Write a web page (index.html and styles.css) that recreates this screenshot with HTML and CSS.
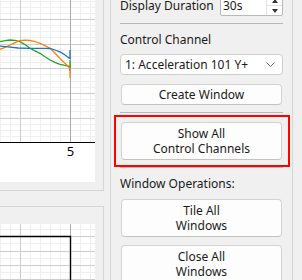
FILE: index.html
```html
<!DOCTYPE html>
<html lang="en">
<head>
  <meta charset="UTF-8">
  <meta name="viewport" content="width=device-width, initial-scale=1.0">
  <title>Channel Monitor</title>
  <link rel="stylesheet" href="styles.css">
</head>
<body>
  <div class="window">
    <div class="plots">
      <div class="plot-frame">
        <svg class="chart" width="95" height="182" viewBox="0 0 95 182">
          <g class="minor">
            <line x1="0" y1="1.5" x2="95" y2="1.5"/><line x1="0" y1="7.5" x2="95" y2="7.5"/><line x1="0" y1="13.5" x2="95" y2="13.5"/>
            <line x1="0" y1="25.5" x2="95" y2="25.5"/><line x1="0" y1="31.5" x2="95" y2="31.5"/><line x1="0" y1="37.5" x2="95" y2="37.5"/>
            <line x1="0" y1="50.5" x2="95" y2="50.5"/><line x1="0" y1="56.5" x2="95" y2="56.5"/><line x1="0" y1="62.5" x2="95" y2="62.5"/>
            <line x1="0" y1="74.5" x2="95" y2="74.5"/><line x1="0" y1="81.5" x2="95" y2="81.5"/><line x1="0" y1="87.5" x2="95" y2="87.5"/>
            <line x1="0" y1="99.5" x2="95" y2="99.5"/><line x1="0" y1="105.5" x2="95" y2="105.5"/><line x1="0" y1="111.5" x2="95" y2="111.5"/>
            <line x1="0" y1="124.5" x2="95" y2="124.5"/><line x1="0" y1="130.5" x2="95" y2="130.5"/><line x1="0" y1="136.5" x2="95" y2="136.5"/>
            <line x1="0.5" y1="0" x2="0.5" y2="142"/><line x1="10.5" y1="0" x2="10.5" y2="142"/><line x1="30.5" y1="0" x2="30.5" y2="142"/>
            <line x1="40.5" y1="0" x2="40.5" y2="142"/><line x1="50.5" y1="0" x2="50.5" y2="142"/><line x1="60.5" y1="0" x2="60.5" y2="142"/>
            <line x1="80.5" y1="0" x2="80.5" y2="142"/><line x1="90.5" y1="0" x2="90.5" y2="142"/>
          </g>
          <g class="major">
            <line x1="0" y1="19.5" x2="95" y2="19.5"/><line x1="0" y1="44.5" x2="95" y2="44.5"/><line x1="0" y1="68.5" x2="95" y2="68.5"/>
            <line x1="0" y1="93.5" x2="95" y2="93.5"/><line x1="0" y1="118.5" x2="95" y2="118.5"/>
            <line x1="20.5" y1="0" x2="20.5" y2="142"/>
          </g>
          <line class="tick-line" x1="70.5" y1="0" x2="70.5" y2="142"/>
          <polyline class="series green" points="0,41.7 5,40.6 10,40 15,40.4 20,41.7 25,44.6 30,48.3 35,50.8 40,53.3 45,56.8 50,60 55,62.3 60,64.3 64,65.2 68,66 69.5,66.5 70,71 70,60"/>
          <polyline class="series orange" points="0,49.3 5,47.3 10,45 15,42.6 20,40.7 25,40.2 30,40.3 35,41.5 40,43.3 45,45.6 50,48.3 53,51 56.7,55 60,58.4 63.3,61.7 66,64.3 68.3,66.7 70,68.5 70,77.7"/>
          <polyline class="series blue" points="0,46.2 8,46.8 18,48 30,48.3 45,48.3 50,48.5 55,50 60,51.9 64,54.2 67,56.5 69.5,58.3 70,58.3 70,50"/>
          <line class="axis" x1="0" y1="142.5" x2="95" y2="142.5"/>
          <text class="tick-label" x="70.5" y="156" text-anchor="middle">5</text>
        </svg>
      </div>
      <div class="plot-frame lower">
        <svg class="chart" width="95" height="57" viewBox="0 0 95 57">
          <g class="minor">
            <line x1="0.5" y1="0" x2="0.5" y2="57"/><line x1="10.5" y1="0" x2="10.5" y2="57"/><line x1="30.5" y1="0" x2="30.5" y2="57"/>
            <line x1="40.5" y1="0" x2="40.5" y2="57"/><line x1="50.5" y1="0" x2="50.5" y2="57"/><line x1="60.5" y1="0" x2="60.5" y2="57"/>
            <line x1="80.5" y1="0" x2="80.5" y2="57"/><line x1="90.5" y1="0" x2="90.5" y2="57"/>
            <line x1="0" y1="5.5" x2="95" y2="5.5"/><line x1="0" y1="19.5" x2="95" y2="19.5"/>
            <line x1="0" y1="34.5" x2="95" y2="34.5"/><line x1="0" y1="48.5" x2="95" y2="48.5"/>
          </g>
          <g class="major">
            <line x1="0" y1="27.5" x2="95" y2="27.5"/><line x1="0" y1="41.5" x2="95" y2="41.5"/><line x1="0" y1="55.5" x2="95" y2="55.5"/>
            <line x1="70" y1="12.5" x2="95" y2="12.5"/>
            <line x1="20.5" y1="0" x2="20.5" y2="57"/>
          </g>
          <line class="tick-line" x1="70.5" y1="0" x2="70.5" y2="12"/>
          <polyline class="frame-box" points="0,12.5 70.5,12.5 70.5,57"/>
        </svg>
      </div>
    </div>

    <div class="sidebar">
      <div class="panel">
        <div class="row">
          <span class="text">Display Duration</span>
          <div class="spin">
            <span class="spin-value">30s</span>
            <div class="spin-arrows">
              <span class="arrow up"></span>
              <span class="arrow down"></span>
            </div>
          </div>
        </div>
        <div class="sep first"></div>
        <div class="text caption">Control Channel</div>
        <div class="combo">
          <span>1: Acceleration 101 Y+</span>
          <svg class="chevron" width="9" height="5" viewBox="0 0 9 5"><polyline points="0.5,0.5 4.5,4.5 8.5,0.5"/></svg>
        </div>
        <button class="btn">Create Window</button>
        <div class="sep"></div>
        <div class="marked">
          <button class="btn tall">Show All<br>Control Channels</button>
        </div>
        <div class="sep"></div>
        <div class="text caption ops">Window Operations:</div>
        <button class="btn tall">Tile All<br>Windows</button>
        <button class="btn tall">Close All<br>Windows</button>
      </div>
    </div>
  </div>
</body>
</html>
```

FILE: styles.css
```css
html, body { margin: 0; padding: 0; }
body { background: #f0f0f0; font-family: 'Noto Sans', 'Liberation Sans', sans-serif; font-size: 12px; color: #1a1a1a; width: 302px; height: 280px; overflow: hidden; }
.window { display: flex; gap: 6px; height: 280px; }

/* plots */
.plots { width: 104px; flex: none; }
.plot-frame { border-right: 1px solid #d6d6d6; border-bottom: 1px solid #d6d6d6; padding: 0 8px 8px 0; width: 95px; }
.plot-frame.lower { margin-top: 15px; border-top: 1px solid #d6d6d6; border-bottom: none; padding: 17px 8px 0 0; }
.chart { display: block; background: #fff; }
.chart line { shape-rendering: crispEdges; }
.minor line { stroke: #efefef; stroke-width: 1; }
.major line { stroke: #cdcdcd; stroke-width: 1; }
.tick-line { stroke: #a9a9a9; stroke-width: 1; }
.axis { stroke: #000; stroke-width: 1.4; }
.frame-box { fill: none; stroke: #000; stroke-width: 1.4; }
.series { fill: none; stroke-width: 1.3; stroke-linejoin: miter; }
.green { stroke: #2ca02c; }
.orange { stroke: #ff7f0e; }
.blue { stroke: #1f77b4; }
.tick-label { font-family: 'Noto Sans', 'Liberation Sans', sans-serif; font-size: 13px; fill: #000; }

/* sidebar */
.sidebar { width: 163px; flex: none; border-left: 1px solid #d6d6d6; border-right: 1px solid #d6d6d6; padding: 0 9px; }
.panel { margin-top: -5px; display: flex; flex-direction: column; }
.text { line-height: 16px; white-space: nowrap; }
.row { display: flex; align-items: center; justify-content: space-between; height: 21px; }
.spin { width: 63px; height: 21px; box-sizing: border-box; background: #fff; border: 1px solid #b9b9b9; border-radius: 2px; display: flex; }
.spin-value { flex: 1; padding-left: 2px; line-height: 19px; }
.spin-arrows { width: 15px; display: flex; flex-direction: column; border-left: 1px solid #e2e2e2; }
.arrow { flex: 1; display: flex; align-items: center; justify-content: center; }
.arrow.up { border-bottom: 1px solid #e2e2e2; }
.arrow::after { content: ''; border-left: 3px solid transparent; border-right: 3px solid transparent; }
.arrow.up::after { border-bottom: 4px solid #333; }
.arrow.down::after { border-top: 4px solid #333; }
.sep { height: 1px; background: #b7b7b7; margin: 7px 0 9px; }
.sep.first { margin: 7px 0 8px; }
.caption { margin-bottom: 6px; }
.caption.ops { margin-top: -1px; margin-bottom: 7px; }
.combo { height: 21px; box-sizing: border-box; background: #fff; border: 1px solid #cfcfcf; border-radius: 4px; display: flex; align-items: center; justify-content: space-between; padding: 0 7px 0 4px; margin-bottom: 9px; }
.chevron polyline { fill: none; stroke: #666; stroke-width: 1; }
.btn { font-family: inherit; font-size: 12px; color: #1a1a1a; background: #fdfdfd; border: 1px solid #d3d3d3; border-bottom-color: #c2c2c2; border-radius: 4px; margin: 0 1px; padding: 0; height: 21px; line-height: 15px; }
.btn.tall { height: 38px; margin-bottom: 8px; }
.marked { position: relative; display: flex; flex-direction: column; }
.marked .btn.tall { margin-bottom: 0; }
.marked::after { content: ''; position: absolute; top: -7px; bottom: -7px; left: -6px; right: -7px; border: 2px solid #f00; pointer-events: none; }
```
